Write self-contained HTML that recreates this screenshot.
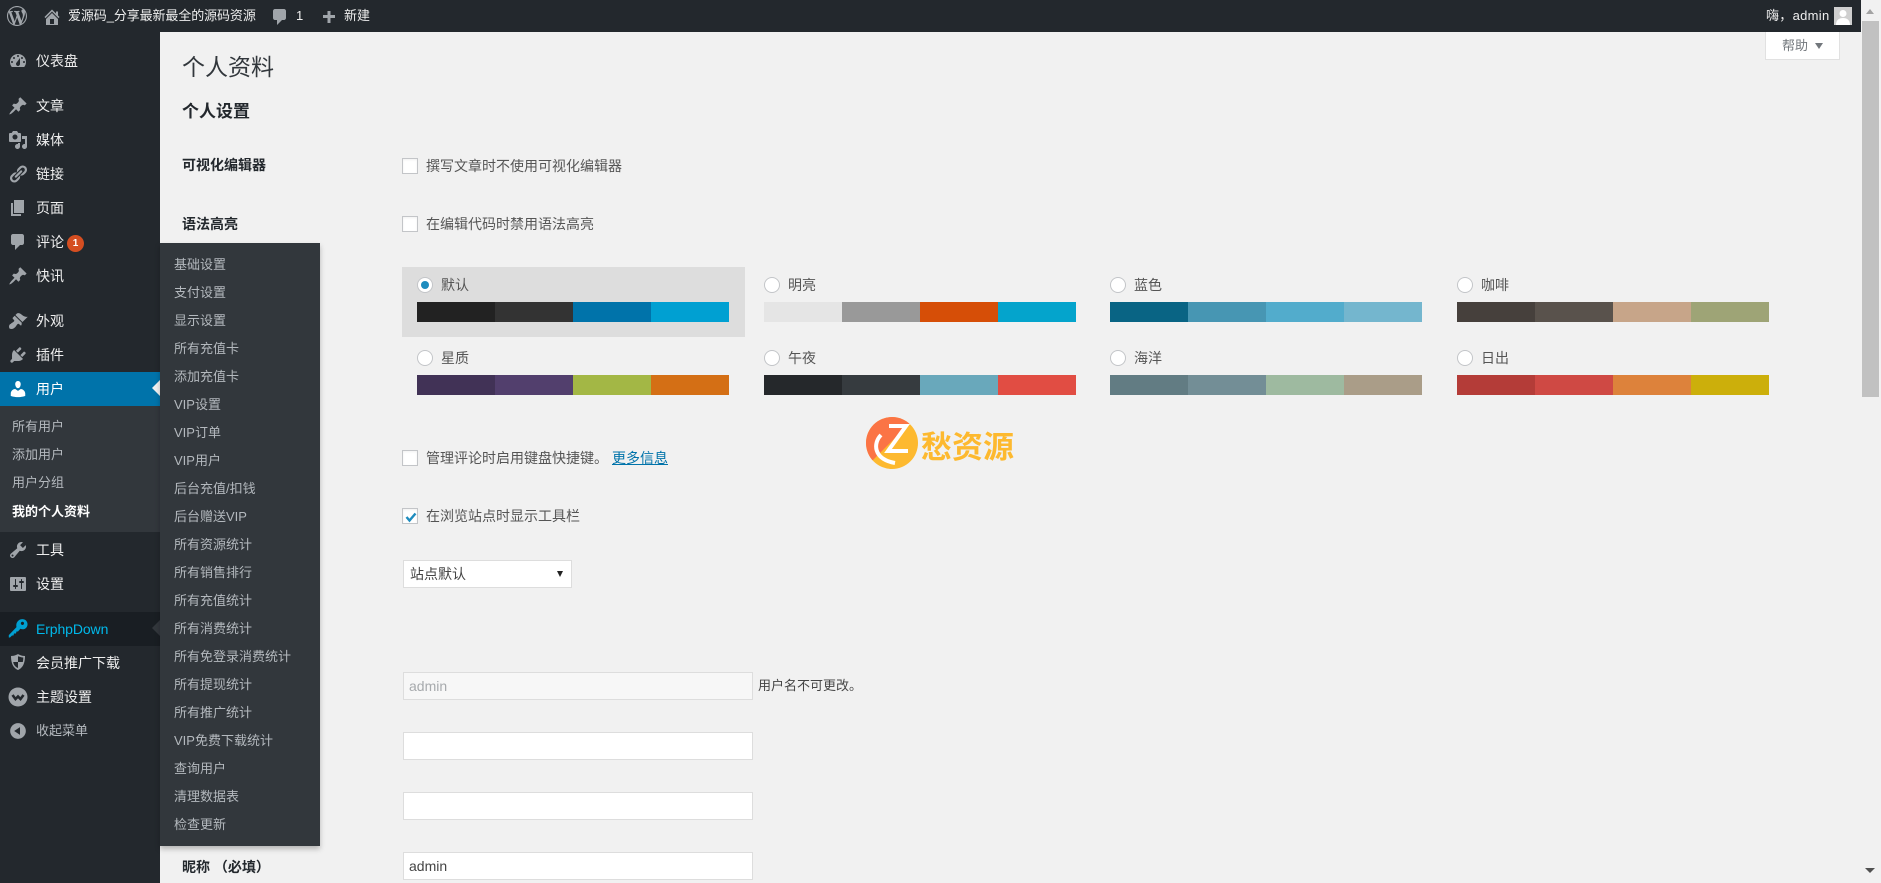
<!DOCTYPE html>
<html lang="zh-CN">
<head>
<meta charset="utf-8">
<title>个人资料</title>
<style>
html,body{margin:0;padding:0}
body{width:1881px;height:883px;overflow:hidden;position:relative;background:#f1f1f1;font-family:"Liberation Sans","Noto Sans CJK SC",sans-serif;font-size:14px;color:#444}
#page{position:absolute;left:0;top:0;width:1881px;height:883px;overflow:hidden;background:#f1f1f1;filter:blur(.3px)}
.t{position:absolute;line-height:20px;height:20px;white-space:nowrap}
.b{position:absolute}
svg{position:absolute;display:block}
#bar{position:absolute;left:0;top:0;width:1861px;height:32px;background:#23282d}
#side{position:absolute;left:0;top:32px;width:160px;height:851px;background:#23282d}
#sub{position:absolute;left:0;top:406px;width:160px;height:126px;background:#32373c}
#cur{position:absolute;left:0;top:372px;width:160px;height:34px;background:#0073aa}
#erp{position:absolute;left:0;top:612px;width:160px;height:34px;background:#191e23}
#fly{position:absolute;left:160px;top:243px;width:160px;height:603px;background:#32373c;box-shadow:0 3px 5px rgba(0,0,0,.25)}
.m{color:#eee}.s{color:#b4b9be}.ic{fill:#a0a5aa}
.cb{position:absolute;width:14px;height:14px;left:402px;background:#fff;border:1px solid #c3c5c8;box-shadow:inset 0 1px 2px rgba(0,0,0,.06)}
.lab{font-weight:700;color:#23282d;left:182px}
.sw{position:absolute;height:20px;width:312px;display:flex}
.sw i{display:block;flex:1}
.r{position:absolute;width:14px;height:14px;border:1px solid #c3c5c8;border-radius:50%;background:#fff}
.in{position:absolute;left:403px;width:348px;background:#fff;border:1px solid #ddd}
.f{left:174px;font-size:13px;color:#b4b9be}
</style>
</head>
<body>
<div id="page">
<div id="side"></div>
<div id="bar"></div>
<div id="sub"></div>
<div id="cur"></div>
<div id="erp"></div>

<!-- admin bar -->
<svg style="left:7px;top:6px" width="20" height="20" viewBox="0 0 20 20"><path class="ic" fill-rule="evenodd" d="M20 10c0-5.510-4.490-10-10-10C4.480 0 0 4.490 0 10c0 5.520 4.480 10 10 10 5.510 0 10-4.480 10-10zM7.780 15.370L4.370 6.220c.55-.02 1.170-.08 1.170-.08.5-.06.44-1.130-.06-1.110 0 0-1.450.11-2.370.11-.18 0-.37 0-.58-.01C4.120 2.690 6.870 1.110 10 1.110c2.330 0 4.450.87 6.050 2.340-.68-.11-1.650.39-1.650 1.580 0 .74.45 1.360.9 2.100.35.61.55 1.360.55 2.460 0 1.490-1.400 5-1.400 5l-3.030-8.370c.54-.02.82-.17.82-.17.5-.05.44-1.250-.06-1.220 0 0-1.440.12-2.380.12-.87 0-2.330-.12-2.330-.12-.5-.03-.56 1.200-.06 1.220l.92.08 1.260 3.410zM17.410 10c.24-.64.74-1.870.43-4.250.7 1.290 1.050 2.710 1.050 4.250 0 3.290-1.730 6.240-4.400 7.780.97-2.590 1.940-5.200 2.920-7.780zM6.100 18.090C3.120 16.650 1.110 13.530 1.110 10c0-1.300.23-2.480.72-3.590C3.250 10.300 4.670 14.200 6.100 18.090zm4.030-6.630l2.580 6.980c-.86.29-1.760.45-2.710.45-.79 0-1.570-.11-2.290-.33.81-2.380 1.620-4.740 2.420-7.100z"/></svg>
<svg style="left:42px;top:7px" width="20" height="20" viewBox="0 0 20 20"><path class="ic" fill-rule="evenodd" d="M16 8.500l1.530 1.530-1.060 1.060L10 4.620l-6.470 6.470-1.060-1.060L10 2.500l4 4v-2h2v4zm-6-2.460l6 5.990V18H4v-5.970zM12 17v-5H8v5h4z"/></svg>
<div class="t m" style="left:68px;top:6px;font-size:13px;letter-spacing:-.1px">爱源码_分享最新最全的源码资源</div>
<svg style="left:270px;top:7px" width="20" height="20" viewBox="0 0 20 20"><path class="ic" d="M5 2h9c1.100 0 2 .9 2 2v7c0 1.100-.9 2-2 2h-2l-5 5v-5H5c-1.100 0-2-.9-2-2V4c0-1.100.9-2 2-2z"/></svg>
<div class="t m" style="left:296px;top:6px;font-size:13px">1</div>
<svg style="left:319px;top:6px" width="20" height="20" viewBox="0 0 20 20"><path class="ic" d="M16 9v3h-4.500v5h-3v-5H4V9h4.500V5h3v4z"/></svg>
<div class="t m" style="left:344px;top:6px;font-size:13px">新建</div>
<div class="t m" style="left:1766px;top:6px;font-size:13px;letter-spacing:.3px">嗨，admin</div>
<div class="b" style="left:1834px;top:7px;width:18px;height:18px;background:#cfcfcf;overflow:hidden"><svg style="left:0;top:0" width="18" height="18" viewBox="0 0 18 18"><circle cx="9" cy="6.500" r="3.500" fill="#fff"/><path d="M2 18c0-5 3-7 7-7s7 2 7 7z" fill="#fff"/></svg></div>

<!-- sidebar icons -->
<svg style="left:8px;top:51px" width="20" height="20" viewBox="0 0 20 20"><path class="ic" fill-rule="evenodd" d="M3.760 16h12.480c1.100-1.370 1.760-3.110 1.760-5 0-4.420-3.580-8-8-8s-8 3.580-8 8c0 1.890.66 3.630 1.760 5zM10 4c.55 0 1 .45 1 1s-.45 1-1 1-1-.45-1-1 .45-1 1-1zM6 6c.55 0 1 .45 1 1s-.45 1-1 1-1-.45-1-1 .45-1 1-1zm8 0c.55 0 1 .45 1 1s-.45 1-1 1-1-.45-1-1 .45-1 1-1zm-5.370 5.550L12 7v6c0 1.100-.9 2-2 2s-2-.9-2-2c0-.57.24-1.080.63-1.450zM4 10c.55 0 1 .45 1 1s-.45 1-1 1-1-.45-1-1 .45-1 1-1zm12 0c.55 0 1 .45 1 1s-.45 1-1 1-1-.45-1-1 .45-1 1-1z"/></svg>
<svg style="left:8px;top:96px" width="20" height="20" viewBox="0 0 20 20"><path class="ic" d="M10.440 3.020l1.820-1.820 6.360 6.350-1.830 1.820c-1.050-.68-2.480-.57-3.410.36l-.75.75c-.92.93-1.040 2.350-.35 3.410l-1.830 1.820-2.410-2.410-2.800 2.790c-.42.42-3.380 2.710-3.800 2.290s1.860-3.390 2.280-3.810l2.790-2.790L4.100 9.360l1.830-1.820c1.050.69 2.480.57 3.400-.36l.75-.75c.93-.92 1.050-2.350.36-3.410z"/></svg>
<svg style="left:8px;top:130px" width="20" height="20" viewBox="0 0 20 20"><path class="ic" fill-rule="evenodd" d="M13 11V4c0-.55-.45-1-1-1h-1.670L9 1H5L3.670 3H2c-.55 0-1 .45-1 1v7c0 .55.45 1 1 1h10c.55 0 1-.45 1-1zM7 4.500c1.380 0 2.500 1.120 2.500 2.500S8.380 9.500 7 9.500 4.500 8.380 4.500 7 5.620 4.500 7 4.500zM14 6h5v10.500c0 1.380-1.120 2.500-2.500 2.500S14 17.880 14 16.500s1.120-2.500 2.500-2.500c.17 0 .34.02.5.05V9h-3V6zm-4 8.050V13h2v3.500c0 1.380-1.120 2.500-2.500 2.500S7 17.880 7 16.500 8.120 14 9.500 14c.17 0 .34.02.5.05z"/></svg>
<svg style="left:8px;top:164px" width="20" height="20" viewBox="0 0 20 20"><path class="ic" d="M17.740 2.760c1.680 1.690 1.680 4.410 0 6.100l-1.530 1.520c-1.120 1.120-2.700 1.470-4.140 1.090l2.620-2.610.76-.77.76-.76c.84-.84.84-2.200 0-3.040-.84-.85-2.200-.85-3.040 0l-.77.76-3.380 3.380c-.37-1.440-.02-3.020 1.100-4.140l1.520-1.530c1.690-1.680 4.420-1.680 6.100 0zM8.590 13.430l5.340-5.340c.42-.42.42-1.100 0-1.520-.44-.43-1.130-.39-1.530 0l-5.330 5.340c-.42.42-.42 1.100 0 1.520.44.43 1.130.39 1.520 0zm-.76 2.290l4.140-4.150c.38 1.440.03 3.020-1.090 4.140l-1.520 1.530c-1.690 1.680-4.410 1.680-6.100 0-1.680-1.680-1.680-4.420 0-6.100l1.530-1.520c1.120-1.120 2.700-1.470 4.140-1.100l-4.140 4.150c-.85.84-.85 2.200 0 3.050.84.84 2.200.84 3.040 0z"/></svg>
<svg style="left:8px;top:198px" width="20" height="20" viewBox="0 0 20 20"><path class="ic" d="M6 15V2h10v13H6zm-1 1h8v2H3V5h2v11z"/></svg>
<svg style="left:8px;top:232px" width="20" height="20" viewBox="0 0 20 20"><path class="ic" d="M5 2h9c1.100 0 2 .9 2 2v7c0 1.100-.9 2-2 2h-2l-5 5v-5H5c-1.100 0-2-.9-2-2V4c0-1.100.9-2 2-2z"/></svg>
<svg style="left:8px;top:266px" width="20" height="20" viewBox="0 0 20 20"><path class="ic" d="M10.440 3.020l1.820-1.820 6.360 6.350-1.830 1.820c-1.050-.68-2.480-.57-3.410.36l-.75.75c-.92.93-1.040 2.350-.35 3.410l-1.830 1.820-2.410-2.410-2.800 2.790c-.42.42-3.380 2.710-3.800 2.290s1.860-3.390 2.280-3.810l2.790-2.790L4.100 9.360l1.830-1.820c1.050.69 2.480.57 3.400-.36l.75-.75c.93-.92 1.050-2.350.36-3.410z"/></svg>
<svg style="left:8px;top:311px" width="20" height="20" viewBox="0 0 20 20"><path class="ic" d="M14.480 11.060L7.410 3.990l1.500-1.500c.5-.56 2.300-.47 3.510.32 1.210.8 1.430 1.280 2.910 2.100 1.180.64 2.450 1.260 4.450.85zm-.71.71L6.700 4.700 4.930 6.470c-.39.39-.39 1.020 0 1.410l1.060 1.060c.39.39.39 1.030 0 1.420-.6.6-1.430 1.110-2.210 1.690-.35.26-.7.53-1.010.84C1.430 13.230.4 15.200 1.500 17.500c2.300 1.100 4.270.07 5.610-1.270.31-.31.58-.66.84-1.010.58-.78 1.090-1.610 1.690-2.210.39-.39 1.030-.39 1.420 0l1.060 1.060c.39.39 1.020.39 1.410 0z"/></svg>
<svg style="left:8px;top:345px" width="20" height="20" viewBox="0 0 20 20"><path class="ic" d="M13.110 4.360L9.870 7.600 8 5.730l3.240-3.240c.35-.34 1.050-.2 1.560.32.52.51.66 1.210.31 1.550zm-8 1.770l.91-1.120 9.010 9.010-1.190.84c-.71.71-2.630 1.160-3.820 1.160H6.140L4.900 17.260c-.59.59-1.540.59-2.120 0-.59-.58-.59-1.530 0-2.120l1.240-1.240v-3.880c0-1.130.4-3.190 1.090-3.890zm7.260 3.970l3.240-3.240c.34-.35 1.040-.21 1.550.31.52.51.66 1.210.31 1.550l-3.240 3.250z"/></svg>
<svg style="left:8px;top:379px" width="20" height="20" viewBox="0 0 20 20"><path fill="#fff" d="M10 9.250c-2.270 0-2.730-3.440-2.730-3.440C7 4.020 7.820 2 9.970 2c2.160 0 2.980 2.020 2.710 3.810 0 0-.41 3.440-2.680 3.440zm0 2.570L12.720 10c2.390 0 4.520 2.330 4.520 4.530v2.490s-3.650 1.130-7.240 1.130c-3.650 0-7.240-1.130-7.240-1.130v-2.490c0-2.250 1.940-4.480 4.470-4.480z"/></svg>
<svg style="left:8px;top:540px" width="20" height="20" viewBox="0 0 20 20"><path class="ic" fill-rule="evenodd" d="M16.680 9.770c-1.340 1.340-3.300 1.670-4.950.99l-5.410 6.520c-.99.99-2.590.99-3.580 0s-.99-2.590 0-3.570l6.520-5.420c-.68-1.650-.35-3.610.99-4.950 1.280-1.280 3.120-1.620 4.720-1.060l-2.890 2.890 2.820 2.820 2.860-2.870c.53 1.580.18 3.390-1.080 4.650zM3.810 16.210c.4.39 1.040.39 1.430 0 .4-.4.4-1.040 0-1.430-.39-.4-1.030-.4-1.430 0-.39.39-.39 1.030 0 1.430z"/></svg>
<svg style="left:8px;top:574px" width="20" height="20" viewBox="0 0 20 20"><path class="ic" fill-rule="evenodd" d="M18 16V4c0-.55-.45-1-1-1H3c-.55 0-1 .45-1 1v12c0 .55.45 1 1 1h14c.55 0 1-.45 1-1zM8 11h1c.55 0 1 .45 1 1s-.45 1-1 1H8v1.500c0 .28-.22.5-.5.5s-.5-.22-.5-.5V13H6c-.55 0-1-.45-1-1s.45-1 1-1h1V5.500c0-.28.22-.5.5-.5s.5.22.5.5V11zm5-2h-1c-.55 0-1-.45-1-1s.45-1 1-1h1V5.500c0-.28.22-.5.5-.5s.5.22.5.5V7h1c.55 0 1 .45 1 1s-.45 1-1 1h-1v5.500c0 .28-.22.5-.5.5s-.5-.22-.5-.5V9z"/></svg>
<svg style="left:8px;top:619px" width="20" height="20" viewBox="0 0 20 20"><path fill="#00a0d2" fill-rule="evenodd" d="M18 1.500c2 2 2 5.200.2 7.200-1.600 1.700-3.900 2-5.800 1.100L10 12.500H8.500l-.5 2H6l-.5 2H4L2 18.500H.8v-2.400l7.700-8C7.900 5.600 8.500 3.600 10.300 1.800 12.400-.3 16-.4 18 1.500zM15.800 3.500a1.600 1.600 0 1 0-2.200 2.200 1.600 1.600 0 0 0 2.200-2.200z"/></svg>
<svg style="left:8px;top:652px" width="20" height="20" viewBox="0 0 20 20"><path class="ic" fill-rule="evenodd" d="M10 2s3 2 7 2c0 9-3.500 12.500-7 14-3.500-1.500-7-5-7-14 4 0 7-2 7-2zm0 2.200V10H5.200c.5 3 2.300 5 4.800 6v-6h4.800c.3-1.300.5-2.800.5-4.500-2-.2-3.800-.8-5.300-1.300z"/></svg>
<svg style="left:8px;top:687px" width="20" height="20" viewBox="0 0 20 20"><circle class="ic" cx="10" cy="10" r="9.500"/><path fill="none" stroke="#23282d" stroke-width="2.600" d="M4.500 8l3 4 2.500-2.500 2.500 2.500 3-4"/></svg>
<svg style="left:8px;top:721px" width="20" height="20" viewBox="0 0 20 20"><path class="ic" fill-rule="evenodd" d="M10 2.160c4.330 0 7.840 3.510 7.840 7.840s-3.510 7.840-7.840 7.840S2.160 14.330 2.160 10 5.710 2.160 10 2.160zm2 11.720V6.120L6.180 9.970z"/></svg>

<!-- sidebar text -->
<div class="t m" style="left:36px;top:51px">仪表盘</div>
<div class="t m" style="left:36px;top:96px">文章</div>
<div class="t m" style="left:36px;top:130px">媒体</div>
<div class="t m" style="left:36px;top:164px">链接</div>
<div class="t m" style="left:36px;top:198px">页面</div>
<div class="t m" style="left:36px;top:232px">评论</div>
<div class="b" style="left:67px;top:235px;width:17px;height:17px;border-radius:50%;background:#d54e21;color:#fff;font-size:10px;font-weight:700;line-height:17px;text-align:center">1</div>
<div class="t m" style="left:36px;top:266px">快讯</div>
<div class="t m" style="left:36px;top:311px">外观</div>
<div class="t m" style="left:36px;top:345px">插件</div>
<div class="t" style="left:36px;top:379px;color:#fff">用户</div>
<div class="b" style="left:152px;top:380px;width:0;height:0;border:8px solid transparent;border-left:0;border-right-color:#f1f1f1"></div>
<div class="t s" style="left:12px;top:417px;font-size:13px">所有用户</div>
<div class="t s" style="left:12px;top:445px;font-size:13px">添加用户</div>
<div class="t s" style="left:12px;top:473px;font-size:13px">用户分组</div>
<div class="t" style="left:12px;top:502px;font-size:13px;font-weight:700;color:#fff">我的个人资料</div>
<div class="t m" style="left:36px;top:540px">工具</div>
<div class="t m" style="left:36px;top:574px">设置</div>
<div class="t" style="left:36px;top:619px;color:#00b9eb;letter-spacing:-.1px">ErphpDown</div>
<div class="b" style="left:152px;top:620px;width:0;height:0;border:8px solid transparent;border-left:0;border-right-color:#32373c"></div>
<div class="t m" style="left:36px;top:653px">会员推广下载</div>
<div class="t m" style="left:36px;top:687px">主题设置</div>
<div class="t s" style="left:36px;top:721px;font-size:13px">收起菜单</div>

<!-- flyout -->
<div id="fly"></div>
<div class="t f" style="top:255px">基础设置</div>
<div class="t f" style="top:283px">支付设置</div>
<div class="t f" style="top:311px">显示设置</div>
<div class="t f" style="top:339px">所有充值卡</div>
<div class="t f" style="top:367px">添加充值卡</div>
<div class="t f" style="top:395px">VIP设置</div>
<div class="t f" style="top:423px">VIP订单</div>
<div class="t f" style="top:451px">VIP用户</div>
<div class="t f" style="top:479px">后台充值/扣钱</div>
<div class="t f" style="top:507px">后台赠送VIP</div>
<div class="t f" style="top:535px">所有资源统计</div>
<div class="t f" style="top:563px">所有销售排行</div>
<div class="t f" style="top:591px">所有充值统计</div>
<div class="t f" style="top:619px">所有消费统计</div>
<div class="t f" style="top:647px">所有免登录消费统计</div>
<div class="t f" style="top:675px">所有提现统计</div>
<div class="t f" style="top:703px">所有推广统计</div>
<div class="t f" style="top:731px">VIP免费下载统计</div>
<div class="t f" style="top:759px">查询用户</div>
<div class="t f" style="top:787px">清理数据表</div>
<div class="t f" style="top:815px">检查更新</div>

<!-- help -->
<div class="b" style="left:1765px;top:32px;width:73px;height:27px;background:#fff;border:1px solid #e1e1e1;border-top:0"></div>
<div class="t" style="left:1782px;top:36px;font-size:13px;color:#72777c">帮助</div>
<div class="b" style="left:1815px;top:43px;width:0;height:0;border:4px solid transparent;border-bottom:0;border-top:6px solid #72777c"></div>

<!-- content -->
<div class="t" style="left:182px;top:52px;height:30px;line-height:30px;font-size:23px;color:#32373c;font-weight:400">个人资料</div>
<div class="t" style="left:182px;top:102px;font-size:17px;font-weight:700;color:#23282d">个人设置</div>
<div class="t lab" style="top:155px">可视化编辑器</div>
<div class="t lab" style="top:214px">语法高亮</div>

<div class="cb" style="top:158px"></div>
<div class="t" style="left:426px;top:156px;color:#555">撰写文章时不使用可视化编辑器</div>
<div class="cb" style="top:216px"></div>
<div class="t" style="left:426px;top:214px;color:#555">在编辑代码时禁用语法高亮</div>

<div class="b" style="left:402px;top:267px;width:343px;height:70px;background:#ddd"></div>

<div class="r" style="left:417px;top:277px"></div>
<div class="b" style="left:421px;top:281px;width:8px;height:8px;border-radius:50%;background:#1e8cbe"></div>
<div class="t" style="left:441px;top:275px;color:#555">默认</div>
<div class="sw" style="left:417px;top:302px"><i style="background:#222"></i><i style="background:#333"></i><i style="background:#0073aa"></i><i style="background:#00a0d2"></i></div>

<div class="r" style="left:764px;top:277px"></div>
<div class="t" style="left:788px;top:275px;color:#555">明亮</div>
<div class="sw" style="left:764px;top:302px"><i style="background:#e5e5e5"></i><i style="background:#999"></i><i style="background:#d64e07"></i><i style="background:#04a4cc"></i></div>

<div class="r" style="left:1110px;top:277px"></div>
<div class="t" style="left:1134px;top:275px;color:#555">蓝色</div>
<div class="sw" style="left:1110px;top:302px"><i style="background:#096484"></i><i style="background:#4796b3"></i><i style="background:#52accc"></i><i style="background:#74b6ce"></i></div>

<div class="r" style="left:1457px;top:277px"></div>
<div class="t" style="left:1481px;top:275px;color:#555">咖啡</div>
<div class="sw" style="left:1457px;top:302px"><i style="background:#46403c"></i><i style="background:#59524c"></i><i style="background:#c7a589"></i><i style="background:#9ea476"></i></div>

<div class="r" style="left:417px;top:350px"></div>
<div class="t" style="left:441px;top:348px;color:#555">星质</div>
<div class="sw" style="left:417px;top:375px"><i style="background:#413256"></i><i style="background:#523f6d"></i><i style="background:#a3b745"></i><i style="background:#d46f15"></i></div>

<div class="r" style="left:764px;top:350px"></div>
<div class="t" style="left:788px;top:348px;color:#555">午夜</div>
<div class="sw" style="left:764px;top:375px"><i style="background:#25282b"></i><i style="background:#363b3f"></i><i style="background:#69a8bb"></i><i style="background:#e14d43"></i></div>

<div class="r" style="left:1110px;top:350px"></div>
<div class="t" style="left:1134px;top:348px;color:#555">海洋</div>
<div class="sw" style="left:1110px;top:375px"><i style="background:#627c83"></i><i style="background:#738e96"></i><i style="background:#9ebaa0"></i><i style="background:#aa9d88"></i></div>

<div class="r" style="left:1457px;top:350px"></div>
<div class="t" style="left:1481px;top:348px;color:#555">日出</div>
<div class="sw" style="left:1457px;top:375px"><i style="background:#b43c38"></i><i style="background:#cf4944"></i><i style="background:#dd823b"></i><i style="background:#ccaf0b"></i></div>

<div class="cb" style="top:450px"></div>
<div class="t" style="left:426px;top:448px;color:#555">管理评论时启用键盘快捷键。</div>
<div class="t" style="left:612px;top:448px;color:#0073aa;text-decoration:underline">更多信息</div>

<div class="cb" style="top:508px"></div>
<svg style="left:404px;top:510px" width="14" height="14" viewBox="0 0 14 14"><path d="M2.500 7l3 3.500L11.500 3.500" fill="none" stroke="#1e8cbe" stroke-width="2.400"/></svg>
<div class="t" style="left:426px;top:506px;color:#555">在浏览站点时显示工具栏</div>

<div class="b" style="left:403px;top:560px;width:167px;height:26px;background:#fff;border:1px solid #ddd"></div>
<div class="t" style="left:410px;top:564px;font-size:14px;color:#444">站点默认</div>
<div class="b" style="left:557px;top:571px;width:0;height:0;border:3.500px solid transparent;border-bottom:0;border-top:6px solid #222"></div>

<div class="in" style="top:672px;height:26px;background:#f7f7f7"></div>
<div class="t" style="left:409px;top:676px;color:#a7aaad">admin</div>
<div class="t" style="left:758px;top:676px;font-size:13px;color:#444">用户名不可更改。</div>
<div class="in" style="top:732px;height:26px"></div>
<div class="in" style="top:792px;height:26px"></div>
<div class="in" style="top:852px;height:26px"></div>
<div class="t" style="left:409px;top:856px;color:#444">admin</div>
<div class="t lab" style="top:857px">昵称 （必填）</div>

<!-- watermark -->
<svg style="left:866px;top:417px" width="52" height="52" viewBox="0 0 52 52">
<defs><clipPath id="c"><circle cx="26" cy="26" r="26"/></clipPath></defs>
<g clip-path="url(#c)">
<rect width="52" height="52" fill="#fdb92f"/>
<path d="M0 0H50L4 46L0 52z" fill="#fb7445"/>
</g>
<path d="M23 9h17L22 34h20" fill="none" stroke="#fff" stroke-width="4"/>
<path d="M15 18c-8 8-8 24 14 28" fill="none" stroke="#fff" stroke-width="4"/>
</svg>
<div class="t" style="left:921px;top:427px;height:36px;line-height:36px;font-size:31px;font-weight:700;color:#fdb92f;font-family:'Noto Sans CJK SC',sans-serif">愁资源</div>

<!-- scrollbar -->
<div class="b" style="left:1861px;top:0;width:20px;height:883px;background:#f1f1f1"></div>
<div class="b" style="left:1862px;top:21px;width:17px;height:376px;background:#c1c1c1"></div>
<div class="b" style="left:1866px;top:9px;width:0;height:0;border:4px solid transparent;border-top:0;border-bottom:5px solid #a3a3a3"></div>
<div class="b" style="left:1865px;top:868px;width:0;height:0;border:5px solid transparent;border-bottom:0;border-top:5px solid #505050"></div>
</div>
</body>
</html>
